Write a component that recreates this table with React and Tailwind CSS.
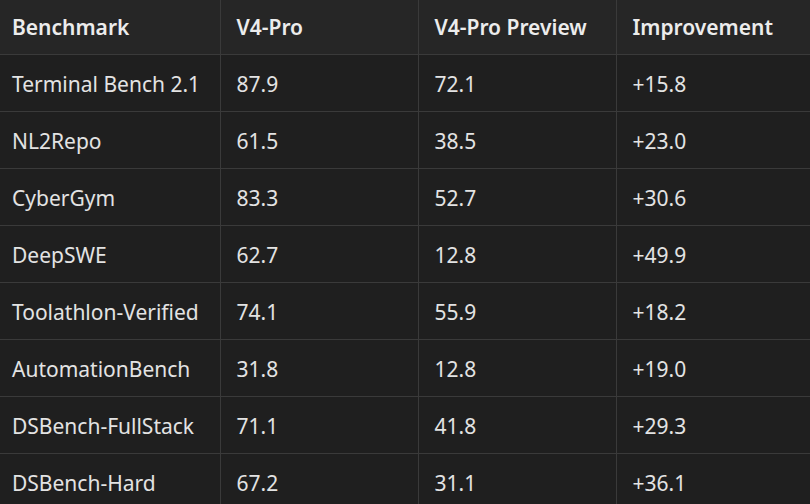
import React from 'react';

const rows = [
  ['Terminal Bench 2.1', '87.9', '72.1', '+15.8'],
  ['NL2Repo', '61.5', '38.5', '+23.0'],
  ['CyberGym', '83.3', '52.7', '+30.6'],
  ['DeepSWE', '62.7', '12.8', '+49.9'],
  ['Toolathlon-Verified', '74.1', '55.9', '+18.2'],
  ['AutomationBench', '31.8', '12.8', '+19.0'],
  ['DSBench-FullStack', '71.1', '41.8', '+29.3'],
  ['DSBench-Hard', '67.2', '31.1', '+36.1'],
];

const headers = ['Benchmark', 'V4-Pro', 'V4-Pro Preview', 'Improvement'];

export default function App() {
  return (
    <div className="w-[810px] h-[504px] overflow-hidden bg-[#1f1f1f] font-['Noto_Sans',sans-serif] text-[21px]">
      <table className="w-[811px] table-fixed border-collapse">
        <colgroup>
          <col className="w-[220px]" />
          <col className="w-[198px]" />
          <col className="w-[198px]" />
          <col className="w-[195px]" />
        </colgroup>
        <thead>
          <tr className="h-[54px] bg-[#262626]">
            {headers.map((h, i) => (
              <th
                key={h}
                className={`text-left font-semibold text-[#ececec] pr-3 pt-0.5 border-b border-[#3a3a3a] ${i > 0 ? 'border-l pl-4' : 'pl-3'}`}
              >
                {h}
              </th>
            ))}
          </tr>
        </thead>
        <tbody>
          {rows.map((r) => (
            <tr key={r[0]} className="h-[57px]">
              {r.map((c, i) => (
                <td
                  key={i}
                  className={`pr-3 pt-1 text-[#e3e3e3] border-b border-[#3a3a3a] whitespace-nowrap ${i > 0 ? 'border-l pl-4' : 'pl-3'}`}
                >
                  {c}
                </td>
              ))}
            </tr>
          ))}
        </tbody>
      </table>
    </div>
  );
}
